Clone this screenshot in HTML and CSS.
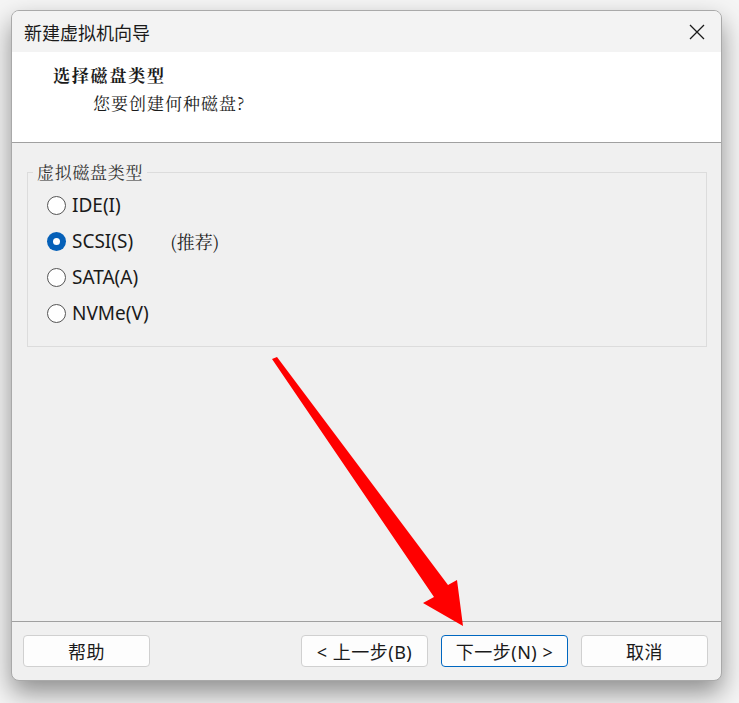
FILE: index.html
```html
<!DOCTYPE html>
<html lang="zh-CN">
<head>
    <meta charset="UTF-8">
    <meta name="viewport" content="width=device-width, initial-scale=1.0">
    <title>新建虚拟机向导</title>
    <link rel="stylesheet" href="styles.css">
</head>
<body>

    <div class="window">
        <div class="titlebar">
            <span class="title">新建虚拟机向导</span>
            <svg class="close" width="16" height="16" viewBox="0 0 16 16">
                <path d="M1 1 L15 15 M15 1 L1 15" stroke="#1a1a1a" stroke-width="1.3" fill="none"/>
            </svg>
        </div>

        <div class="header">
            <div class="head-title">选择磁盘类型</div>
            <div class="head-sub">您要创建何种磁盘?</div>
        </div>

        <div class="content">
            <fieldset class="group">
                <legend>虚拟磁盘类型</legend>

                <div class="radio-row">
                    <span class="radio"></span>
                    <span class="label">IDE(I)</span>
                </div>
                <div class="radio-row">
                    <span class="radio checked"></span>
                    <span class="label">SCSI(S)</span>
                    <span class="note">(推荐)</span>
                </div>
                <div class="radio-row">
                    <span class="radio"></span>
                    <span class="label">SATA(A)</span>
                </div>
                <div class="radio-row">
                    <span class="radio"></span>
                    <span class="label">NVMe(V)</span>
                </div>
            </fieldset>
        </div>

        <div class="footer">
            <button class="btn">帮助</button>
            <div class="spacer"></div>
            <button class="btn">&lt; 上一步(B)</button>
            <button class="btn primary">下一步(N) &gt;</button>
            <button class="btn">取消</button>
        </div>
    </div>

    <!-- annotation arrow drawn over the dialog -->
    <svg class="arrow" width="739" height="703" viewBox="0 0 739 703">
        <polygon points="272,359 277,357 448,585 457,580 463,626 423,603 434,597" fill="#ff0000"/>
    </svg>

</body>
</html>
```

FILE: styles.css
```css
body{
    margin: 0;
    min-height: 703px;
    background: #f5f5f5;
    font-family: "Noto Sans", "Noto Sans CJK SC", sans-serif;
    color: #1a1a1a;
}

.window{
    margin: 10px 0 0 11px;
    width: 711px;
    height: 671px;
    box-sizing: border-box;
    border: 1px solid #a9a9a9;
    border-radius: 8px;
    overflow: hidden;
    display: flex;
    flex-direction: column;
    background: #f0f0f0;
    box-shadow: 0 12px 26px rgba(0, 0, 0, 0.42);
}

.titlebar{
    height: 41px;
    flex: none;
    background: #f3f3f3;
    display: flex;
    align-items: center;
    padding: 0 16px 0 12px;
}
.title{
    font-family: "Noto Sans CJK SC", sans-serif;
    font-size: 18px;
    flex: 1;
}
.close{
    display: block;
    margin-top: 1px;
}

.header{
    height: 90px;
    flex: none;
    background: #fff;
    border-bottom: 1px solid #a0a0a0;
    box-sizing: content-box;
    font-family: "Noto Serif CJK SC", "Noto Sans CJK SC", serif;
}
.head-title{
    font-size: 17px;
    font-weight: bold;
    line-height: 24px;
    margin: 11px 0 0 41px;
    letter-spacing: 1.8px;
}
.head-sub{
    font-size: 17px;
    line-height: 24px;
    margin: 4px 0 0 81px;
    letter-spacing: 1px;
}

.content{
    flex: 1;
    padding: 19px 14px 0 15px;
}

.group{
    margin: 0;
    padding: 5px 0 15px 19px;
    border: 1px solid #dcdcdc;
}
.group legend{
    margin-left: -14px;
    padding: 0 4px;
    font-family: "Noto Serif CJK SC", "Noto Sans CJK SC", serif;
    font-size: 17px;
    line-height: 20px;
    color: #333;
    letter-spacing: 0.7px;
}

.radio-row{
    height: 36px;
    display: flex;
    align-items: center;
    font-size: 19px;
}
.radio{
    width: 19px;
    height: 19px;
    box-sizing: border-box;
    border: 1px solid #555;
    border-radius: 50%;
    background: #fff;
    margin-right: 6px;
    position: relative;
}
.radio.checked{
    border: none;
    background: #0560b8;
}
.radio.checked::after{
    content: "";
    position: absolute;
    left: 6px;
    top: 6px;
    width: 7px;
    height: 7px;
    border-radius: 50%;
    background: #fff;
}
.note{
    margin-left: 37px;
    font-family: "Noto Serif CJK SC", "Noto Sans CJK SC", serif;
    font-size: 18px;
}

.footer{
    height: 59px;
    box-sizing: border-box;
    flex: none;
    border-top: 1px solid #a0a0a0;
    display: flex;
    gap: 13px;
    padding: 13px 13px 0 11px;
}
.spacer{
    flex: 1;
}
.btn{
    width: 127px;
    height: 32px;
    background: #fdfdfd;
    border: 1px solid #d0d0d0;
    border-radius: 4px;
    font-family: "Noto Sans", "Noto Sans CJK SC", sans-serif;
    font-size: 18px;
    letter-spacing: 0.5px;
    color: #1a1a1a;
    padding: 0;
}
.btn.primary{
    border-color: #0067c0;
}

.arrow{
    position: absolute;
    left: 0;
    top: 0;
    pointer-events: none;
}
```
